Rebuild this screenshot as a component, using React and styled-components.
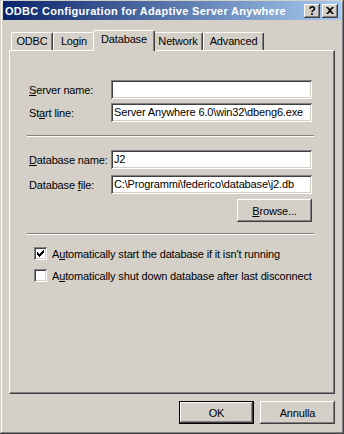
import React from 'react';
import styled, { createGlobalStyle } from 'styled-components';

const Global = createGlobalStyle`
  html, body { margin: 0; padding: 0; background: #d4d0c8; }
  body {
    font-family: "Liberation Sans", Arial, sans-serif;
    font-size: 11px;
    letter-spacing: -0.15px;
    color: #000;
  }
  u { text-decoration: underline; text-underline-offset: 1px; }
`;

const raised = `
  box-shadow: inset -1px -1px #404040, inset 1px 1px #ffffff,
    inset -2px -2px #808080, inset 2px 2px #d4d0c8;
`;

const sunken = `
  box-shadow: inset 1px 1px #808080, inset -1px -1px #ffffff,
    inset 2px 2px #404040, inset -2px -2px #d4d0c8;
`;

const Window = styled.div`
  width: 344px;
  height: 434px;
  box-sizing: border-box;
  background: #d4d0c8;
  padding: 1px 3px 3px 3px;
  box-shadow: inset -1px -1px #404040, inset 1px 1px #d4d0c8,
    inset -2px -2px #808080, inset 2px 2px #ffffff;
  display: flex;
  flex-direction: column;
`;

const TitleBar = styled.div`
  height: 19px;
  background: linear-gradient(to right, #0a246a, #a6caf0);
  display: flex;
  align-items: center;
  padding: 0 3px 0 2px;
  gap: 2px;
`;

const Title = styled.div`
  flex: 1;
  color: #fff;
  font-weight: bold;
  font-size: 11px;
  letter-spacing: 0.3px;
  white-space: nowrap;
  overflow: hidden;
`;

const CaptionButton = styled.div`
  width: 16px;
  height: 14px;
  box-sizing: border-box;
  background: #d4d0c8;
  ${raised}
  display: flex;
  align-items: center;
  justify-content: center;
  font-weight: bold;
  font-size: 12px;
  line-height: 14px;
`;

const TabRow = styled.div`
  display: flex;
  align-items: flex-end;
  height: 20px;
  margin-top: 10px;
  padding-left: 8px;
`;

const Tab = styled.div`
  position: relative;
  z-index: ${p => (p.$active ? 2 : 1)};
  width: ${p => p.$w + (p.$active ? 4 : 0)}px;
  height: ${p => (p.$active ? 21 : 18)}px;
  margin: 0 ${p => (p.$active ? -2 : 0)}px ${p => (p.$active ? -1 : 0)}px;
  box-sizing: border-box;
  background: #d4d0c8;
  border-top: 1px solid #fff;
  border-left: 1px solid #fff;
  border-right: 1px solid #404040;
  border-radius: 2px 2px 0 0;
  box-shadow: inset -1px 0 #808080;
  display: flex;
  justify-content: center;
  padding-top: 2px;
  font-size: 11px;
`;

const Panel = styled.div`
  margin-left: 6px;
  width: 326px;
  height: 344px;
  box-sizing: border-box;
  border-top: 1px solid #fff;
  border-left: 1px solid #fff;
  border-right: 1px solid #404040;
  border-bottom: 1px solid #404040;
  box-shadow: inset -1px -1px #808080;
  padding: 29px 0 0 17px;
  display: flex;
  flex-direction: column;
`;

const Fields = styled.div`
  display: grid;
  grid-template-columns: 84px 201px;
  row-gap: ${p => p.$gap}px;
  align-items: center;
`;

const Label = styled.div`
  padding-left: 2px;
  white-space: nowrap;
`;

const Field = styled.div`
  height: 19px;
  box-sizing: border-box;
  background: #fff;
  ${sunken}
  padding: 0 3px;
  line-height: 19px;
  white-space: nowrap;
  overflow: hidden;
`;

const Separator = styled.div`
  width: 287px;
  height: 0;
  border-top: 1px solid #808080;
  border-bottom: 1px solid #fff;
  margin: ${p => p.$top}px 0 ${p => p.$bottom}px;
`;

const Button = styled.div`
  width: 75px;
  height: 23px;
  box-sizing: border-box;
  background: #d4d0c8;
  ${raised}
  display: flex;
  align-items: center;
  justify-content: center;
  ${p => p.$default && `border: 1px solid #000;`}
`;

const BrowseRow = styled.div`
  display: flex;
  justify-content: flex-end;
  width: 285px;
  margin-top: 5px;
`;

const Checks = styled.div`
  display: flex;
  flex-direction: column;
  gap: 9px;
  padding-left: 7px;
`;

const CheckRow = styled.div`
  display: flex;
  align-items: center;
  gap: 5px;
  height: 13px;
`;

const Box = styled.div`
  width: 13px;
  height: 13px;
  box-sizing: border-box;
  background: #fff;
  ${sunken}
  flex-shrink: 0;
`;

const Footer = styled.div`
  display: flex;
  justify-content: flex-end;
  gap: 6px;
  margin: 7px 6px 0 0;
`;

const CheckMark = () => (
  <svg width="13" height="13" viewBox="0 0 13 13">
    <path d="M3 5h1v1h1v1h1V6h1V5h1V4h1V3h1v3H9v1H8v1H7v1H6v1H5V9H4V8H3z" fill="#000" />
  </svg>
);

const CloseGlyph = () => (
  <svg width="8" height="7" viewBox="0 0 8 7">
    <path d="M0 0h2l2 2 2-2h2L5 3.5 8 7H6L4 5 2 7H0l3-3.5z" fill="#000" />
  </svg>
);

const tabs = [
  { label: 'ODBC', w: 42 },
  { label: 'Login', w: 42 },
  { label: 'Database', w: 58, active: true },
  { label: 'Network', w: 50 },
  { label: 'Advanced', w: 61 },
];

export default function App() {
  return (
    <>
      <Global />
      <Window>
        <TitleBar>
          <Title>ODBC Configuration for Adaptive Server Anywhere</Title>
          <CaptionButton>?</CaptionButton>
          <CaptionButton><CloseGlyph /></CaptionButton>
        </TitleBar>

        <TabRow>
          {tabs.map(t => (
            <Tab key={t.label} $w={t.w} $active={t.active}>{t.label}</Tab>
          ))}
        </TabRow>

        <Panel>
          <Fields $gap={4}>
            <Label><u>S</u>erver name:</Label>
            <Field />
            <Label>St<u>a</u>rt line:</Label>
            <Field>{'Server Anywhere 6.0\\win32\\dbeng6.exe'}</Field>
          </Fields>

          <Separator $top={13} $bottom={13} />

          <Fields $gap={6}>
            <Label><u>D</u>atabase name:</Label>
            <Field>J2</Field>
            <Label>Database <u>f</u>ile:</Label>
            <Field>{'C:\\Programmi\\federico\\database\\j2.db'}</Field>
          </Fields>
          <BrowseRow>
            <Button><span><u>B</u>rowse...</span></Button>
          </BrowseRow>

          <Separator $top={11} $bottom={12} />

          <Checks>
            <CheckRow>
              <Box><CheckMark /></Box>
              <span>A<u>u</u>tomatically start the database if it isn't running</span>
            </CheckRow>
            <CheckRow>
              <Box />
              <span>A<u>u</u>tomatically shut down database after last disconnect</span>
            </CheckRow>
          </Checks>
        </Panel>

        <Footer>
          <Button $default>OK</Button>
          <Button>Annulla</Button>
        </Footer>
      </Window>
    </>
  );
}
